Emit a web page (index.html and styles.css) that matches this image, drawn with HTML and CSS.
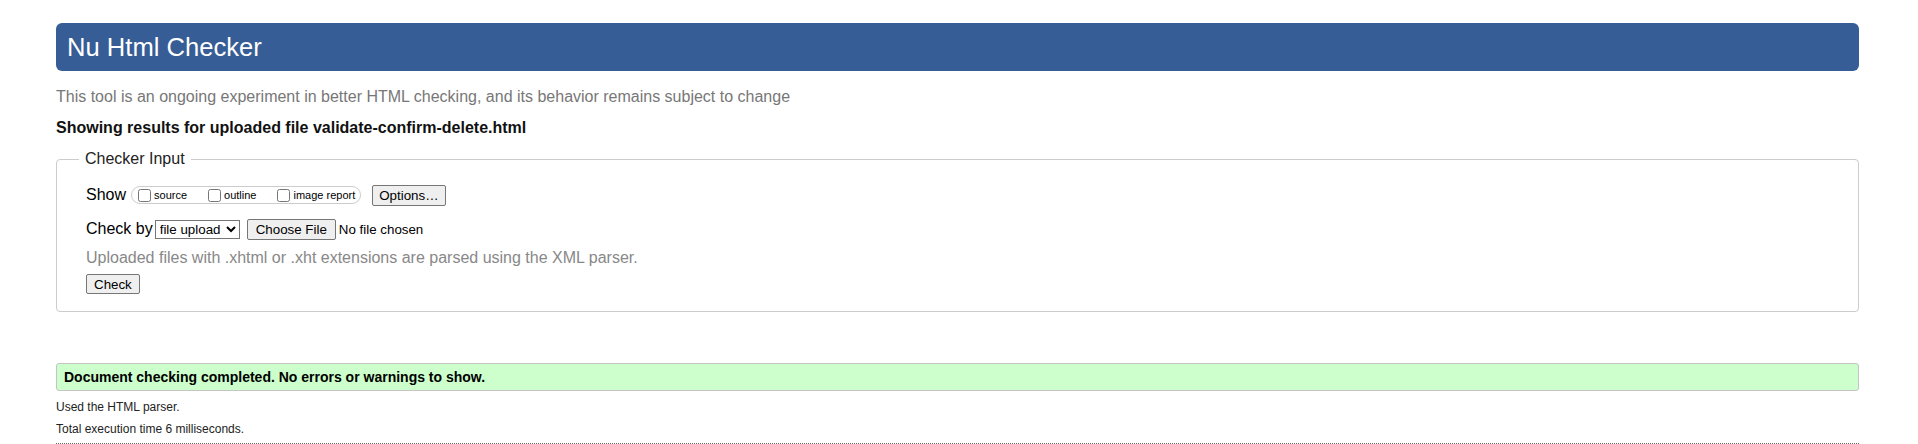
FILE: index.html
```html
<!DOCTYPE html>
<html lang="en">
<head>
<meta charset="utf-8">
<title>Nu Html Checker</title>
<link rel="stylesheet" href="styles.css">
</head>
<body>
<h1 class="title">Nu Html Checker</h1>
<p class="intro">This tool is an ongoing experiment in better HTML checking, and its behavior remains subject to change</p>
<p class="showing">Showing results for uploaded file validate-confirm-delete.html</p>
<form class="checker">
  <fieldset class="input-box">
    <legend class="input-legend">Checker Input</legend>
    <div class="row row-show">
      <span class="row-label">Show</span>
      <fieldset class="show-box">
        <label class="opt"><input type="checkbox" class="cb">source</label>
        <label class="opt"><input type="checkbox" class="cb">outline</label>
        <label class="opt"><input type="checkbox" class="cb">image report</label>
      </fieldset>
      <button type="button" class="btn">Options…</button>
    </div>
    <div class="row row-check">
      <span class="row-label">Check by</span>
      <select class="sel"><option>file upload</option></select>
      <input type="file" class="file">
    </div>
    <p class="note">Uploaded files with .xhtml or .xht extensions are parsed using the XML parser.</p>
    <button type="button" class="btn btn-check">Check</button>
  </fieldset>
</form>
<p class="success">Document checking completed. No errors or warnings to show.</p>
<p class="details">Used the HTML parser.</p>
<p class="details">Total execution time 6 milliseconds.</p>
<hr class="dots">
</body>
</html>
```
FILE: styles.css
```css
html, body {
  margin: 0;
  background: #fff;
}
body {
  padding: 23px 59px 0 56px;
  font-family: "Liberation Sans", Arial, sans-serif;
  font-size: 16px;
  color: #000;
}
.title {
  margin: 0;
  height: 48px;
  box-sizing: border-box;
  padding: 9px 11px;
  font-size: 25.6px;
  line-height: 30px;
  font-weight: normal;
  color: #fff;
  background: #365d95;
  border-radius: 6px;
}
.intro {
  margin: 16px 0 0;
  line-height: 20px;
  color: #777;
}
.showing {
  margin: 11px 0 0;
  line-height: 20px;
  font-weight: bold;
  color: #111;
}
.checker {
  margin: 11px 0 0;
}
.input-box {
  margin: 0;
  padding: 14px 20px 17px 29px;
  border: 1px solid #ccc;
  border-radius: 4px;
  min-inline-size: 0;
}
.input-legend {
  padding: 0 6px;
  margin-left: -7px;
  line-height: 20px;
  color: #222;
}
.row {
  display: flex;
  align-items: center;
  height: 24px;
}
.row-show .show-box {
  margin: 0 0 0 5px;
}
.row-check {
  margin-top: 10px;
}
.row-label {
  line-height: 20px;
}
.show-box {
  display: flex;
  align-items: center;
  height: 18px;
  box-sizing: border-box;
  padding: 0 5px 0 2px;
  border: 1px solid #ccc;
  border-radius: 9px;
  min-inline-size: 0;
}
.opt {
  display: flex;
  align-items: center;
  font-size: 11px;
  margin-right: 17px;
}
.opt:last-child {
  margin-right: 0;
}
.cb {
  width: 13px;
  height: 13px;
  margin: 0 3px 0 4px;
}
.btn {
  font-family: "Liberation Sans", Arial, sans-serif;
  font-size: 13.33px;
  height: 21px;
  padding: 0 6px;
  margin-left: 11px;
  color: #000;
  background: #efefef;
  border: 1px solid #767676;
  border-radius: 2px;
}
.sel {
  font-family: "Liberation Sans", Arial, sans-serif;
  font-size: 13.33px;
  height: 19px;
  margin-left: 2px;
  padding: 0;
  width: 85px;
  color: #000;
  background: #fff;
  border: 1px solid #767676;
  border-radius: 0;
}
.file {
  font-family: "Liberation Sans", Arial, sans-serif;
  font-size: 13.33px;
  margin-left: 7px;
  color: #000;
}
.file::file-selector-button {
  font-family: "Liberation Sans", Arial, sans-serif;
  font-size: 13.33px;
  height: 21px;
  padding: 0 8px;
  margin-right: 3px;
  background: #efefef;
  border: 1px solid #767676;
  border-radius: 2px;
}
.note {
  margin: 7px 0 0;
  line-height: 20px;
  color: #888;
}
.btn-check {
  display: block;
  margin: 6px 0 0;
  height: 20px;
  padding: 0 7px;
}
.success {
  margin: 51px 0 0;
  height: 28px;
  box-sizing: border-box;
  padding: 0 7px;
  font-size: 14px;
  line-height: 26px;
  font-weight: bold;
  background: #ccffcc;
  border: 1px solid #c4c4c4;
  border-radius: 3px;
}
.details {
  margin: 8px 0 0;
  font-size: 12px;
  line-height: 16px;
  color: #222;
}
.details + .details {
  margin-top: 6px;
}
.dots {
  margin: 6px 0 0;
  height: 0;
  border: 0;
  border-top: 1px dotted #666;
}
```
